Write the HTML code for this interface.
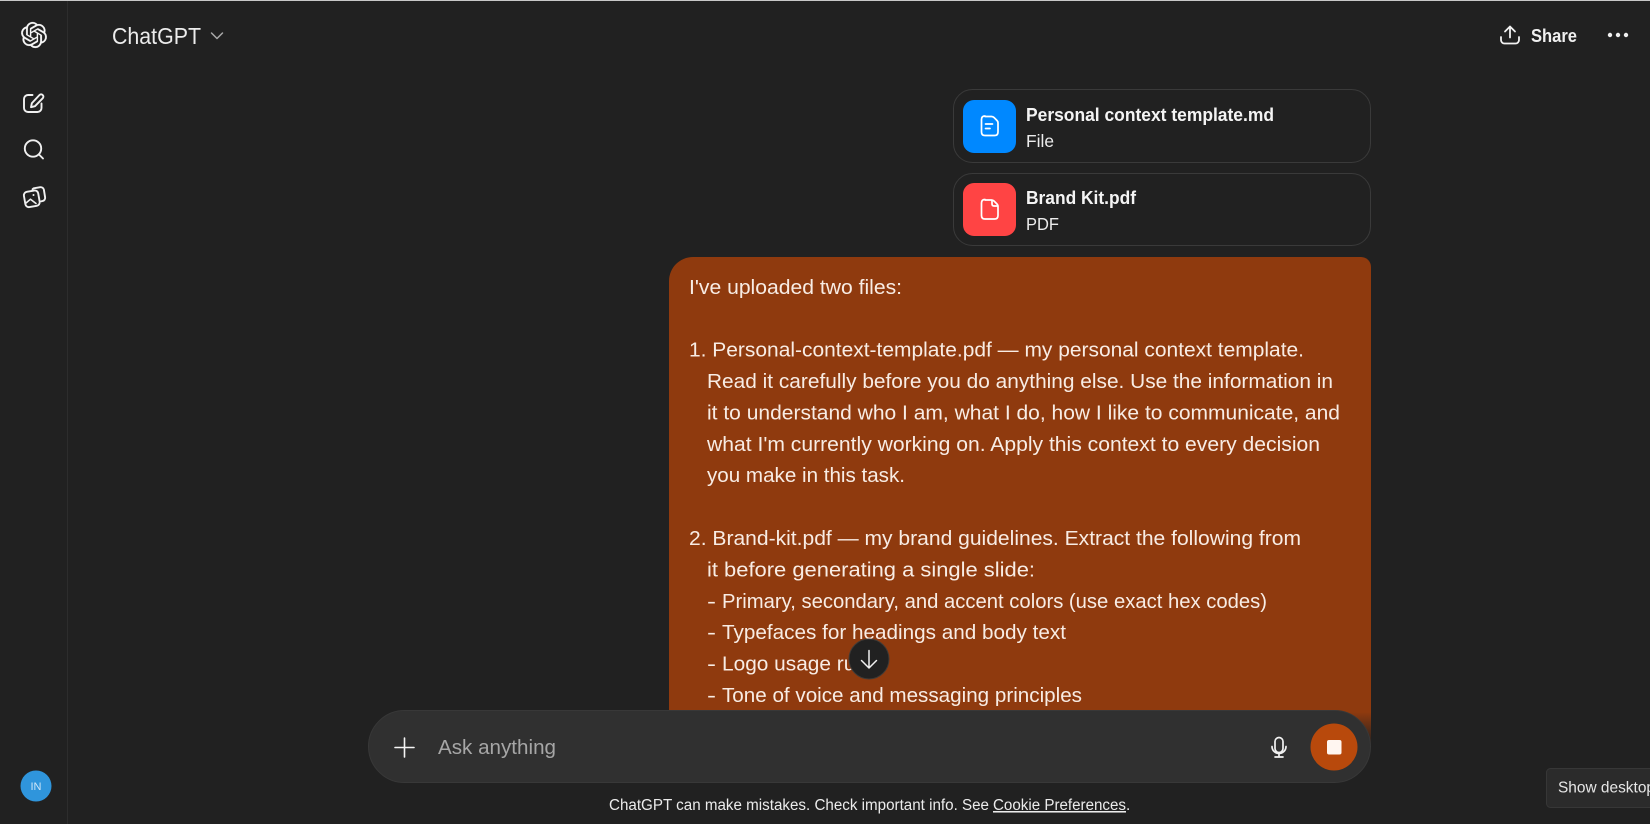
<!DOCTYPE html>
<html lang="en">
<head>
<meta charset="utf-8">
<title>ChatGPT</title>
<style>
html,body{margin:0;padding:0;width:1650px;height:824px;overflow:hidden;background:#212121}
svg{display:block;position:absolute;left:0;top:0}
text{font-family:"Liberation Sans",sans-serif}
.m{font-size:20.5px;fill:#f8ece4}
.n{font-size:18px;fill:#f4f4f4;font-weight:700}
.s{font-size:17.5px;fill:#ececec}
.f{font-size:15.5px;fill:#ececec}
</style>
</head>
<body>
<svg width="1650" height="824" viewBox="0 0 1650 824" xmlns="http://www.w3.org/2000/svg">
<defs>
<linearGradient id="fade" x1="0" y1="0" x2="0" y2="1">
<stop offset="0" stop-color="#212121" stop-opacity="0"/>
<stop offset="1" stop-color="#212121"/>
</linearGradient>
</defs>
<rect width="1650" height="824" fill="#212121"/>
<rect x="0" y="0" width="1650" height="1" fill="#c8c8c8"/>
<rect x="67" y="1" width="1" height="823" fill="#2d2d2d"/>

<!-- Logo -->
<g transform="translate(21 22) scale(1.083)" fill="#f6f6f6" stroke="#f6f6f6" stroke-width="0.2">
<path d="M22.282 9.821a5.985 5.985 0 0 0-.516-4.91 6.046 6.046 0 0 0-6.51-2.9A6.065 6.065 0 0 0 4.981 4.18a5.985 5.985 0 0 0-3.998 2.9 6.046 6.046 0 0 0 .743 7.097 5.98 5.98 0 0 0 .51 4.911 6.051 6.051 0 0 0 6.515 2.9A5.985 5.985 0 0 0 13.26 24a6.056 6.056 0 0 0 5.772-4.206 5.99 5.99 0 0 0 3.997-2.9 6.051 6.051 0 0 0-.747-7.073zM13.26 22.43a4.476 4.476 0 0 1-2.876-1.04l.141-.081 4.779-2.758a.795.795 0 0 0 .392-.681v-6.737l2.02 1.168a.071.071 0 0 1 .038.052v5.583a4.504 4.504 0 0 1-4.494 4.494zM3.6 18.304a4.47 4.47 0 0 1-.535-3.014l.142.085 4.783 2.759a.771.771 0 0 0 .78 0l5.843-3.369v2.332a.08.08 0 0 1-.033.062L9.74 19.95a4.5 4.5 0 0 1-6.14-1.646zM2.34 7.896a4.485 4.485 0 0 1 2.366-1.973V11.6a.766.766 0 0 0 .388.676l5.815 3.355-2.02 1.168a.076.076 0 0 1-.071 0l-4.83-2.786A4.504 4.504 0 0 1 2.34 7.872zm16.597 3.855l-5.833-3.387L15.119 7.2a.076.076 0 0 1 .071 0l4.83 2.791a4.494 4.494 0 0 1-.676 8.105v-5.678a.79.79 0 0 0-.407-.667zm2.01-3.023l-.141-.085-4.774-2.782a.776.776 0 0 0-.785 0L9.409 9.23V6.897a.066.066 0 0 1 .028-.061l4.83-2.787a4.5 4.5 0 0 1 6.68 4.66zm-12.64 4.135l-2.02-1.164a.08.08 0 0 1-.038-.057V6.075a4.5 4.5 0 0 1 7.375-3.453l-.142.08L8.704 5.46a.795.795 0 0 0-.393.681zm1.097-2.365l2.602-1.5 2.607 1.5v2.999l-2.597 1.5-2.607-1.5Z"/>
</g>

<g fill="none" stroke="#f0f0f0" stroke-width="1.9" stroke-linecap="round" stroke-linejoin="round">
<!-- New chat -->
<path d="M32.500 95h-4.500a4 4 0 0 0-4 4v9a4 4 0 0 0 4 4h9.500a4 4 0 0 0 4-4v-4.500"/>
<path d="M39.500 95a2.300 2.300 0 0 1 3.300 3.200l-7.800 8-4 1 .9-4.100z"/>
<!-- Search -->
<circle cx="33" cy="148.500" r="8.200"/>
<path d="M39 154.500l4 4"/>
<!-- Images -->
<rect x="24.500" y="191" width="14.500" height="15.500" rx="3.500" transform="rotate(-10 32 198.500)"/>
<path d="M32.500 189.200l1.200-.9 6.500-1.100a3.200 3.200 0 0 1 3.700 2.600l1.200 7.500a3.200 3.200 0 0 1-2.500 3.700l-1.300.3"/>
<path d="M26 203l4.500-3.800 5.500 4.300" stroke-width="1.600"/>
<circle cx="33.500" cy="195" r="1" fill="#f0f0f0" stroke="none"/>
</g>

<!-- Header -->
<text x="112" y="44" font-size="23.5px" fill="#ececec" textLength="89" lengthAdjust="spacingAndGlyphs">ChatGPT</text>
<path d="M211.500 33l5.500 5.500 5.500-5.500" fill="none" stroke="#a8a8a8" stroke-width="1.500" stroke-linecap="round" stroke-linejoin="round"/>
<g fill="none" stroke="#f2f2f2" stroke-width="1.800" stroke-linecap="round" stroke-linejoin="round">
<path d="M1510 37.500V26.500M1505 31.500l5-5 5 5"/>
<path d="M1501 37v3a3.500 3.500 0 0 0 3.500 3.500h11a3.500 3.500 0 0 0 3.500-3.500v-3"/>
</g>
<text x="1531" y="42" font-size="18.500px" font-weight="700" fill="#f0f0f0" textLength="46" lengthAdjust="spacingAndGlyphs">Share</text>
<g fill="#f0f0f0"><circle cx="1610" cy="35" r="2.200"/><circle cx="1618" cy="35" r="2.200"/><circle cx="1626" cy="35" r="2.200"/></g>

<!-- File cards -->
<rect x="953.500" y="89.500" width="417" height="73" rx="19" fill="#212121" stroke="#3a3a3a"/>
<rect x="963" y="100" width="53" height="53" rx="11" fill="#0088ff"/>
<g fill="none" stroke="#fff" stroke-width="1.700" stroke-linecap="round" stroke-linejoin="round">
<path d="M985 116.500h6.500q1.500 0 2.500 1l3 3q1 1 1 2.500v9q0 3.500-3.500 3.500h-9.500q-3.500 0-3.500-3.500v-12.500q0-3.500 3.500-3.500z"/>
<path d="M985.500 124h7M985.500 128.500h4.500"/>
</g>
<text class="n" x="1026" y="121" textLength="248" lengthAdjust="spacingAndGlyphs">Personal context template.md</text>
<text class="s" x="1026" y="147" textLength="28" lengthAdjust="spacingAndGlyphs">File</text>

<rect x="953.500" y="173.500" width="417" height="72" rx="19" fill="#212121" stroke="#3a3a3a"/>
<rect x="963" y="183" width="53" height="53" rx="11" fill="#ff4444"/>
<g fill="none" stroke="#fff" stroke-width="1.700" stroke-linecap="round" stroke-linejoin="round">
<path d="M985 200h6.500q1.500 0 2.500 1l3 3q1 1 1 2.500v9q0 3.500-3.500 3.500h-9.500q-3.500 0-3.500-3.500v-12.500q0-3.500 3.500-3.500z"/>
<path d="M992 200.500v3.500q0 2 2 2h3.500"/>
</g>
<text class="n" x="1026" y="204" textLength="110" lengthAdjust="spacingAndGlyphs">Brand Kit.pdf</text>
<text class="s" x="1026" y="230" textLength="33" lengthAdjust="spacingAndGlyphs">PDF</text>

<!-- Bubble -->
<path d="M693 257H1361a10 10 0 0 1 10 10V760H669V281a24 24 0 0 1 24-24z" fill="#8f3a0e"/>
<text class="m" x="689" y="294" textLength="213" lengthAdjust="spacingAndGlyphs">I've uploaded two files:</text>
<text class="m" x="689" y="356.500" textLength="615" lengthAdjust="spacingAndGlyphs">1. Personal-context-template.pdf — my personal context template.</text>
<text class="m" x="707" y="388" textLength="626" lengthAdjust="spacingAndGlyphs">Read it carefully before you do anything else. Use the information in</text>
<text class="m" x="707" y="419.500" textLength="633" lengthAdjust="spacingAndGlyphs">it to understand who I am, what I do, how I like to communicate, and</text>
<text class="m" x="707" y="451" textLength="613" lengthAdjust="spacingAndGlyphs">what I'm currently working on. Apply this context to every decision</text>
<text class="m" x="707" y="482" textLength="198" lengthAdjust="spacingAndGlyphs">you make in this task.</text>
<text class="m" x="689" y="545" textLength="612" lengthAdjust="spacingAndGlyphs">2. Brand-kit.pdf — my brand guidelines. Extract the following from</text>
<text class="m" x="707" y="576.500" textLength="328" lengthAdjust="spacingAndGlyphs">it before generating a single slide:</text>
<text class="m" x="707" y="608" textLength="9" lengthAdjust="spacingAndGlyphs">-</text>
<text class="m" x="722" y="608" textLength="545" lengthAdjust="spacingAndGlyphs">Primary, secondary, and accent colors (use exact hex codes)</text>
<text class="m" x="707" y="639" textLength="9" lengthAdjust="spacingAndGlyphs">-</text>
<text class="m" x="722" y="639" textLength="344" lengthAdjust="spacingAndGlyphs">Typefaces for headings and body text</text>
<text class="m" x="707" y="670.500" textLength="9" lengthAdjust="spacingAndGlyphs">-</text>
<text class="m" x="722" y="670.500" textLength="160" lengthAdjust="spacingAndGlyphs">Logo usage rules</text>
<text class="m" x="707" y="702" textLength="9" lengthAdjust="spacingAndGlyphs">-</text>
<text class="m" x="722" y="702" textLength="360" lengthAdjust="spacingAndGlyphs">Tone of voice and messaging principles</text>

<!-- Fade behind composer -->
<rect x="660" y="712" width="720" height="34" fill="url(#fade)"/>
<rect x="660" y="746" width="720" height="20" fill="#212121"/>

<!-- Scroll button -->
<circle cx="869" cy="659" r="20" fill="#212121" stroke="#3f3a36"/>
<path d="M869 650.500v17M861.500 660.500l7.500 7.500 7.500-7.500" fill="none" stroke="#f0f0f0" stroke-width="1.500" stroke-linecap="round" stroke-linejoin="round"/>

<!-- Composer -->
<rect x="368.500" y="710.500" width="1002" height="72" rx="36" fill="#303030" stroke="#383838"/>
<path d="M404.500 738v19M395 747.500h19" stroke="#f5f5f5" stroke-width="1.600" stroke-linecap="round"/>
<text x="438" y="754" font-size="20.500px" fill="#a6a6a6" textLength="118" lengthAdjust="spacingAndGlyphs">Ask anything</text>
<g fill="none" stroke="#f2f2f2" stroke-width="1.700" stroke-linecap="round" stroke-linejoin="round">
<rect x="1275" y="737.500" width="8" height="15" rx="4"/>
<path d="M1272 746.500a7 7 0 0 0 14 0M1279 753.500v3.500M1275 757h8"/>
</g>
<circle cx="1334" cy="747" r="23.500" fill="#b8490c"/>
<rect x="1327" y="740" width="14.500" height="14.500" rx="2" fill="#fff6f0"/>

<!-- Footer -->
<text class="f" x="609" y="810" textLength="380" lengthAdjust="spacingAndGlyphs">ChatGPT can make mistakes. Check important info. See</text>
<text class="f" x="993" y="810" textLength="133" lengthAdjust="spacingAndGlyphs" text-decoration="underline">Cookie Preferences</text>
<text class="f" x="1126" y="810">.</text>

<!-- Avatar -->
<circle cx="36" cy="786" r="15.500" fill="#2f95dc"/>
<text x="36" y="790" font-size="11px" fill="#cfe6f7" text-anchor="middle">IN</text>

<!-- Tooltip -->
<rect x="1546.500" y="768.500" width="120" height="39" rx="4" fill="#2b2b2b" stroke="#373737"/>
<text x="1558" y="792.500" font-size="16px" fill="#e6e6e6" textLength="97" lengthAdjust="spacingAndGlyphs">Show desktop</text>
</svg>
</body>
</html>
